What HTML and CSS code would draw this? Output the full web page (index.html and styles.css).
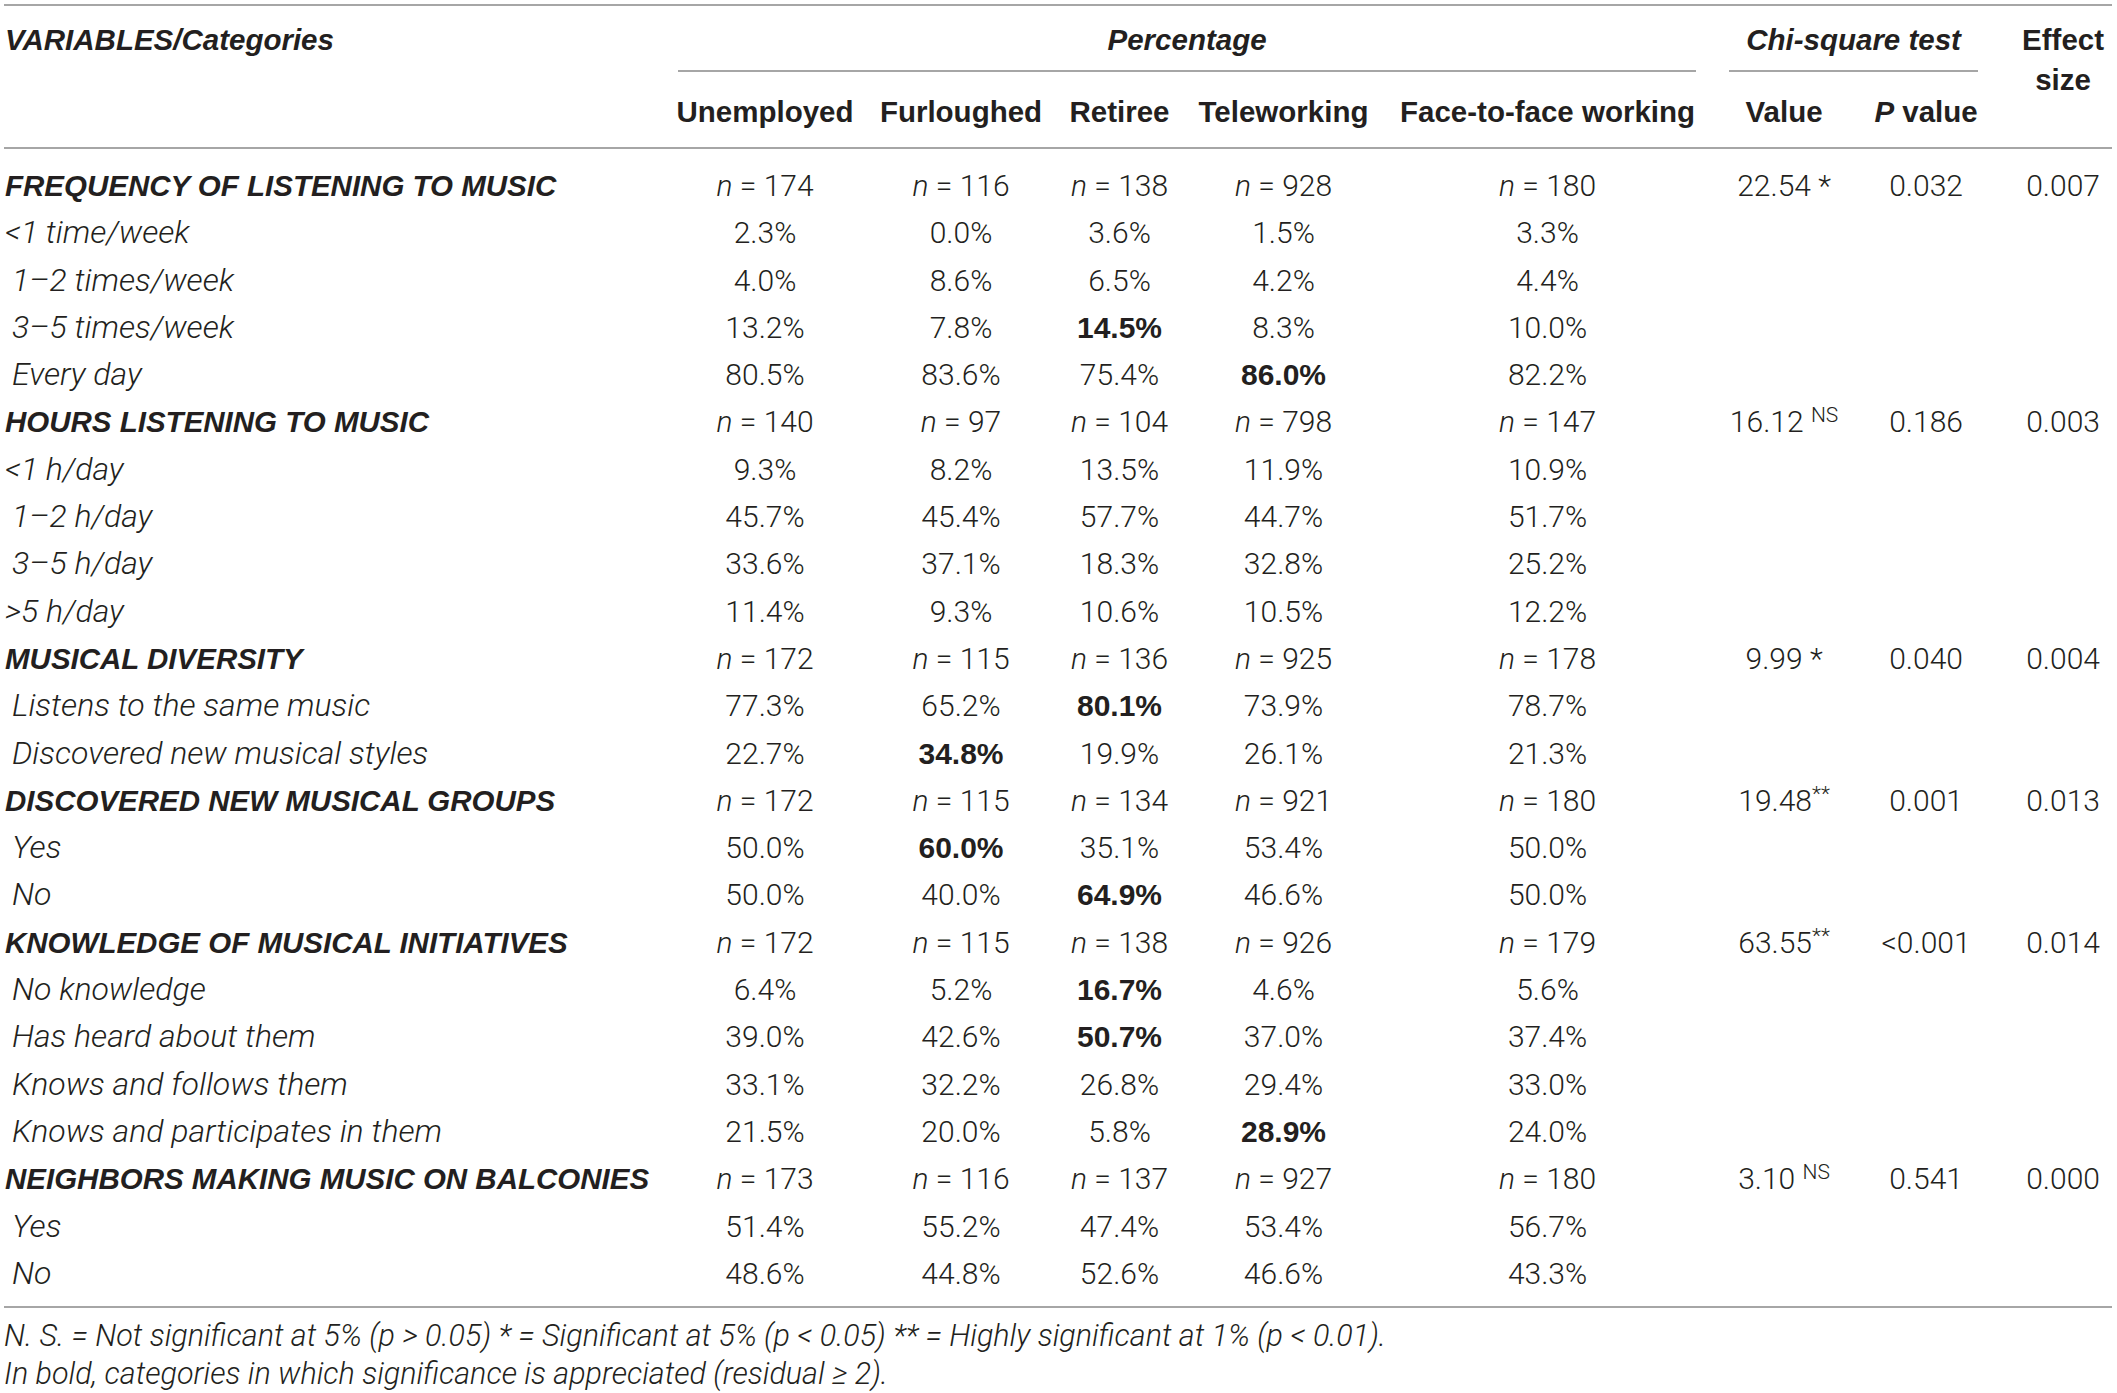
FILE: index.html
```html
<!DOCTYPE html>
<html lang="en">
<head>
<meta charset="utf-8">
<title>Table</title>
<link rel="stylesheet" href="styles.css">
</head>
<body>
<table class="tbl">
  <colgroup>
    <col class="c-label">
    <col class="c-u">
    <col class="c-f">
    <col class="c-r">
    <col class="c-t">
    <col class="c-ff">
    <col class="c-v">
    <col class="c-p">
    <col class="c-e">
  </colgroup>
  <thead>
    <tr class="h1">
      <th rowspan="2" class="lab hi">VARIABLES/Categories</th>
      <th colspan="5" class="grp"><div class="ul pct hi">Percentage</div></th>
      <th colspan="2" class="grp"><div class="ul chi hi">Chi-square test</div></th>
      <th rowspan="2" class="eff">Effect<br>size</th>
    </tr>
    <tr class="h2">
      <th>Unemployed</th>
      <th>Furloughed</th>
      <th>Retiree</th>
      <th>Teleworking</th>
      <th>Face-to-face working</th>
      <th>Value</th>
      <th><i>P</i> value</th>
    </tr>
  </thead>
  <tbody>
    <tr class="var"><td>FREQUENCY OF LISTENING TO MUSIC</td><td><i>n</i> = 174</td><td><i>n</i> = 116</td><td><i>n</i> = 138</td><td><i>n</i> = 928</td><td><i>n</i> = 180</td><td>22.54 *</td><td>0.032</td><td>0.007</td></tr>
    <tr><td>&lt;1 time/week</td><td>2.3%</td><td>0.0%</td><td>3.6%</td><td>1.5%</td><td>3.3%</td><td></td><td></td><td></td></tr>
    <tr><td class="ind">1–2 times/week</td><td>4.0%</td><td>8.6%</td><td>6.5%</td><td>4.2%</td><td>4.4%</td><td></td><td></td><td></td></tr>
    <tr><td class="ind">3–5 times/week</td><td>13.2%</td><td>7.8%</td><td><b>14.5%</b></td><td>8.3%</td><td>10.0%</td><td></td><td></td><td></td></tr>
    <tr><td class="ind">Every day</td><td>80.5%</td><td>83.6%</td><td>75.4%</td><td><b>86.0%</b></td><td>82.2%</td><td></td><td></td><td></td></tr>
    <tr class="var"><td>HOURS LISTENING TO MUSIC</td><td><i>n</i> = 140</td><td><i>n</i> = 97</td><td><i>n</i> = 104</td><td><i>n</i> = 798</td><td><i>n</i> = 147</td><td>16.12 <sup>NS</sup></td><td>0.186</td><td>0.003</td></tr>
    <tr><td>&lt;1 h/day</td><td>9.3%</td><td>8.2%</td><td>13.5%</td><td>11.9%</td><td>10.9%</td><td></td><td></td><td></td></tr>
    <tr><td class="ind">1–2 h/day</td><td>45.7%</td><td>45.4%</td><td>57.7%</td><td>44.7%</td><td>51.7%</td><td></td><td></td><td></td></tr>
    <tr><td class="ind">3–5 h/day</td><td>33.6%</td><td>37.1%</td><td>18.3%</td><td>32.8%</td><td>25.2%</td><td></td><td></td><td></td></tr>
    <tr><td>&gt;5 h/day</td><td>11.4%</td><td>9.3%</td><td>10.6%</td><td>10.5%</td><td>12.2%</td><td></td><td></td><td></td></tr>
    <tr class="var"><td>MUSICAL DIVERSITY</td><td><i>n</i> = 172</td><td><i>n</i> = 115</td><td><i>n</i> = 136</td><td><i>n</i> = 925</td><td><i>n</i> = 178</td><td>9.99 *</td><td>0.040</td><td>0.004</td></tr>
    <tr><td class="ind">Listens to the same music</td><td>77.3%</td><td>65.2%</td><td><b>80.1%</b></td><td>73.9%</td><td>78.7%</td><td></td><td></td><td></td></tr>
    <tr><td class="ind">Discovered new musical styles</td><td>22.7%</td><td><b>34.8%</b></td><td>19.9%</td><td>26.1%</td><td>21.3%</td><td></td><td></td><td></td></tr>
    <tr class="var"><td>DISCOVERED NEW MUSICAL GROUPS</td><td><i>n</i> = 172</td><td><i>n</i> = 115</td><td><i>n</i> = 134</td><td><i>n</i> = 921</td><td><i>n</i> = 180</td><td>19.48<sup>**</sup></td><td>0.001</td><td>0.013</td></tr>
    <tr><td class="ind">Yes</td><td>50.0%</td><td><b>60.0%</b></td><td>35.1%</td><td>53.4%</td><td>50.0%</td><td></td><td></td><td></td></tr>
    <tr><td class="ind">No</td><td>50.0%</td><td>40.0%</td><td><b>64.9%</b></td><td>46.6%</td><td>50.0%</td><td></td><td></td><td></td></tr>
    <tr class="var"><td>KNOWLEDGE OF MUSICAL INITIATIVES</td><td><i>n</i> = 172</td><td><i>n</i> = 115</td><td><i>n</i> = 138</td><td><i>n</i> = 926</td><td><i>n</i> = 179</td><td>63.55<sup>**</sup></td><td>&lt;0.001</td><td>0.014</td></tr>
    <tr><td class="ind">No knowledge</td><td>6.4%</td><td>5.2%</td><td><b>16.7%</b></td><td>4.6%</td><td>5.6%</td><td></td><td></td><td></td></tr>
    <tr><td class="ind">Has heard about them</td><td>39.0%</td><td>42.6%</td><td><b>50.7%</b></td><td>37.0%</td><td>37.4%</td><td></td><td></td><td></td></tr>
    <tr><td class="ind">Knows and follows them</td><td>33.1%</td><td>32.2%</td><td>26.8%</td><td>29.4%</td><td>33.0%</td><td></td><td></td><td></td></tr>
    <tr><td class="ind">Knows and participates in them</td><td>21.5%</td><td>20.0%</td><td>5.8%</td><td><b>28.9%</b></td><td>24.0%</td><td></td><td></td><td></td></tr>
    <tr class="var"><td>NEIGHBORS MAKING MUSIC ON BALCONIES</td><td><i>n</i> = 173</td><td><i>n</i> = 116</td><td><i>n</i> = 137</td><td><i>n</i> = 927</td><td><i>n</i> = 180</td><td>3.10 <sup>NS</sup></td><td>0.541</td><td>0.000</td></tr>
    <tr><td class="ind">Yes</td><td>51.4%</td><td>55.2%</td><td>47.4%</td><td>53.4%</td><td>56.7%</td><td></td><td></td><td></td></tr>
    <tr><td class="ind">No</td><td>48.6%</td><td>44.8%</td><td>52.6%</td><td>46.6%</td><td>43.3%</td><td></td><td></td><td></td></tr>
  </tbody>
</table>
<div class="notes">
  <p>N. S. = Not significant at 5% (p &gt; 0.05) * = Significant at 5% (p &lt; 0.05) ** = Highly significant at 1% (p &lt; 0.01).</p>
  <p>In bold, categories in which significance is appreciated (residual ≥ 2).</p>
</div>
</body>
</html>
```

FILE: styles.css
```css
html, body {
  margin: 0;
  padding: 0;
  background: #ffffff;
}
body {
  color: #231f20;
  font-family: Roboto, "Liberation Sans", sans-serif;
  font-weight: 300;
  padding: 4px 5px 0 4px;
}
.tbl {
  table-layout: fixed;
  border-collapse: collapse;
  border-spacing: 0;
  width: 2108px;
  font-size: 30px;
  border-top: 2px solid #a6a6a6;
  border-bottom: 2px solid #a6a6a6;
}
.c-label { width: 659px; }
.c-u { width: 204px; }
.c-f { width: 188px; }
.c-r { width: 129px; }
.c-t { width: 199px; }
.c-ff { width: 329px; }
.c-v { width: 144px; }
.c-p { width: 140px; }
.c-e { width: 116px; }

th {
  font-family: "Liberation Sans", Arial, sans-serif;
  font-weight: 700;
  font-size: 29.5px;
  line-height: 40px;
  padding: 0;
  text-align: center;
  vertical-align: top;
}
.hi { font-style: italic; }
.h1 th { padding-top: 14px; }
.h1 th.lab { text-align: left; padding-left: 1px; }
.ul { border-bottom: 2px solid #a6a6a6; padding-bottom: 10px; }
.pct { margin: 0 16px 0 15px; }
.chi { margin: 0 18px 0 17px; }
.h1 th.eff { padding-left: 18px; }
.h2 th { padding-top: 20px; padding-bottom: 15px; }
thead tr.h2 { border-bottom: 2px solid #a6a6a6; }

td {
  padding: 0;
  height: 47.3px;
  line-height: 47.3px;
  text-align: center;
  white-space: nowrap;
}
td:first-child {
  text-align: left;
  font-style: italic;
  font-size: 32px;
  padding-left: 1px;
}
td.ind { padding-left: 8px; }
tr.var td:first-child {
  font-family: "Liberation Sans", Arial, sans-serif;
  font-weight: 700;
  font-size: 29.5px;
}
td b {
  font-family: "Liberation Sans", Arial, sans-serif;
  font-weight: 700;
}
td:last-child { padding-left: 18px; }
tbody tr:first-child td { padding-top: 13px; }
tbody tr:last-child td { padding-bottom: 9px; }
sup {
  font-size: 21px;
  line-height: 0;
  vertical-align: 10px;
}
.notes {
  font-size: 30.5px;
  font-style: italic;
  padding-top: 9px;
}
.notes p {
  margin: 0;
  line-height: 38px;
  white-space: nowrap;
}
```
